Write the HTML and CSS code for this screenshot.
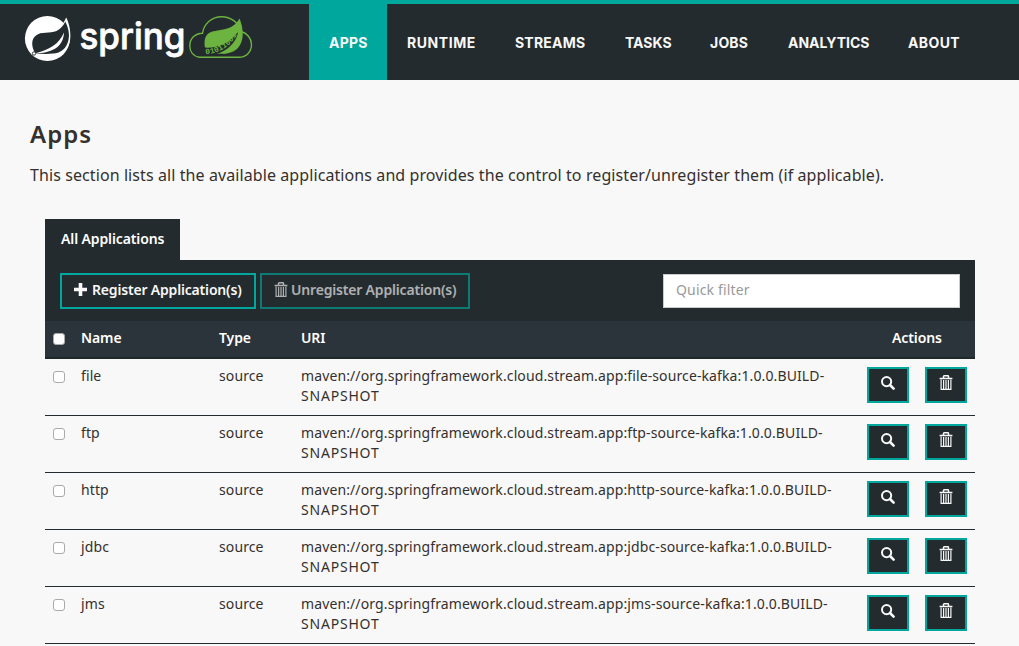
FILE: index.html
```html
<!DOCTYPE html>
<html lang="en">
<head>
<meta charset="utf-8">
<title>Apps</title>
<link rel="stylesheet" href="styles.css">
</head>
<body>
<svg class="sprite" aria-hidden="true">
  <symbol id="trash" viewBox="0 0 14 16">
    <path d="M4.500 2.800V1.500Q4.500.8 5.200.8h3.600q.7 0 .7.7V2.800M.6 3.500h12.800" fill="none" stroke="currentColor" stroke-width="1.500"/>
    <path d="M2.100 4.400v9.900h9.800V4.400M4.600 5v9M7 5v9M9.400 5v9" fill="none" stroke="currentColor" stroke-width="1.200"/>
  </symbol>
  <symbol id="search" viewBox="0 0 14 14">
    <circle cx="5.600" cy="5.600" r="4.600" fill="none" stroke="currentColor" stroke-width="2"/>
    <path d="M9 9l3.600 3.600" fill="none" stroke="currentColor" stroke-width="2.600" stroke-linecap="round"/>
  </symbol>
</svg>
<header class="navbar">
  <svg class="logo" width="240" height="60" viewBox="20 4 240 60">
    <circle cx="47.400" cy="38.500" r="22.500" fill="#fff"/>
    <path d="M66.200 17.500C68.500 22 70.500 29 70.400 36C70.300 45 66 53 58 57L60 30Z" fill="#fff"/>
    <path d="M65.300 21.500C68.500 28 69.800 34 68.500 40C66.500 48.500 61 53 53 53.600C47 54.300 41 54 36.300 53.500L34.500 52C31.500 46.500 31 39 36 35.500C41 31 50 34 56.500 31C60.500 29 63.500 25.500 65.300 21.500Z" fill="#242b2e"/>
    <path d="M64 32.500C59 44 50 49.500 35.500 53.300C50 53.300 63.500 48 64 32.500Z" fill="#fff"/>
    <circle cx="34" cy="53.500" r="1.700" fill="#fff" stroke="#242b2e" stroke-width=".9"/>
    <text class="wordmark" x="79.500" y="49" textLength="106" lengthAdjust="spacingAndGlyphs">spring</text>
    <path d="M200 57.300C193 56.500 189.800 51.500 189.800 46C189.800 38.500 195 33.400 202.500 33.200C204 23.500 212 16.700 221.500 16.700C231 16.700 239 23 241 31.500C247 33 251.500 38.500 251.500 44.500C251.500 52 246 57.300 239 57.300Z" fill="none" stroke="#6db33f" stroke-width="1.400"/>
    <path d="M239.500 18.500C243 27 244 36 241 43C237 53 227 54.500 216 53.500L205.500 50C204 44 203.500 35.500 210 32.500C219 28.500 232 32 239.500 18.500Z" fill="#6db33f"/>
    <path d="M204 47.500C217 48.500 229 44 238 32C237 44 229 53 214 56L204 56Z" fill="#242b2e"/>
    <path d="M217 53.700C227 51 235 43 238 34L241 40C238 50 230 54.500 217 53.700Z" fill="#6db33f"/>
    <path id="code-line" d="M205.500 54.200C220 53.500 231 46 238.500 32" fill="none"/>
    <text class="bits"><textPath href="#code-line">01011001</textPath></text>
  </svg>
  <nav class="nav">
    <a class="nav-item active">APPS</a>
    <a class="nav-item runtime">RUNTIME</a>
    <a class="nav-item streams">STREAMS</a>
    <a class="nav-item tasks">TASKS</a>
    <a class="nav-item jobs">JOBS</a>
    <a class="nav-item analytics">ANALYTICS</a>
    <a class="nav-item about">ABOUT</a>
  </nav>
</header>
<main class="content">
  <h1 class="title">Apps</h1>
  <p class="intro">This section lists all the available applications and provides the control to register/unregister them (if applicable).</p>
  <section class="panel">
    <div class="tab">All Applications</div>
    <div class="toolbar">
      <button class="btn register"><svg width="13" height="13" viewBox="0 0 13 13"><path d="M6.500 0v13M0 6.500h13" stroke="currentColor" stroke-width="3.600"/></svg><span>Register Application(s)</span></button>
      <button class="btn unregister"><svg width="14" height="16"><use href="#trash"/></svg><span>Unregister Application(s)</span></button>
      <input class="filter" placeholder="Quick filter">
    </div>
    <div class="row head">
      <span><i class="check"></i></span><span>Name</span><span>Type</span><span>URI</span><span class="actions-title">Actions</span>
    </div>
    <div class="row">
      <span><i class="check"></i></span><span>file</span><span>source</span><span class="uri">maven://org.springframework.cloud.stream.app:file-source-kafka:1.0.0.BUILD-<br>SNAPSHOT</span>
      <span class="actions"><button class="icon-btn"><svg width="14" height="14"><use href="#search"/></svg></button><button class="icon-btn"><svg width="14" height="16"><use href="#trash"/></svg></button></span>
    </div>
    <div class="row">
      <span><i class="check"></i></span><span>ftp</span><span>source</span><span class="uri">maven://org.springframework.cloud.stream.app:ftp-source-kafka:1.0.0.BUILD-<br>SNAPSHOT</span>
      <span class="actions"><button class="icon-btn"><svg width="14" height="14"><use href="#search"/></svg></button><button class="icon-btn"><svg width="14" height="16"><use href="#trash"/></svg></button></span>
    </div>
    <div class="row">
      <span><i class="check"></i></span><span>http</span><span>source</span><span class="uri">maven://org.springframework.cloud.stream.app:http-source-kafka:1.0.0.BUILD-<br>SNAPSHOT</span>
      <span class="actions"><button class="icon-btn"><svg width="14" height="14"><use href="#search"/></svg></button><button class="icon-btn"><svg width="14" height="16"><use href="#trash"/></svg></button></span>
    </div>
    <div class="row">
      <span><i class="check"></i></span><span>jdbc</span><span>source</span><span class="uri">maven://org.springframework.cloud.stream.app:jdbc-source-kafka:1.0.0.BUILD-<br>SNAPSHOT</span>
      <span class="actions"><button class="icon-btn"><svg width="14" height="14"><use href="#search"/></svg></button><button class="icon-btn"><svg width="14" height="16"><use href="#trash"/></svg></button></span>
    </div>
    <div class="row">
      <span><i class="check"></i></span><span>jms</span><span>source</span><span class="uri">maven://org.springframework.cloud.stream.app:jms-source-kafka:1.0.0.BUILD-<br>SNAPSHOT</span>
      <span class="actions"><button class="icon-btn"><svg width="14" height="14"><use href="#search"/></svg></button><button class="icon-btn"><svg width="14" height="16"><use href="#trash"/></svg></button></span>
    </div>
  </section>
</main>
</body>
</html>
```
FILE: styles.css
```css
* { box-sizing: border-box; }
html { overflow: hidden; }
body {
  margin: 0;
  background: #f8f8f8;
  color: #34302d;
  font: 14px/20px "Noto Sans", sans-serif;
}
.sprite { display: none; }
.navbar {
  display: flex;
  height: 80px;
  border-top: 4px solid #00a79d;
  background: #242b2e;
}
.logo { flex: none; margin: 0 49px 0 20px; }
.wordmark {
  font: 500 37px Inter, sans-serif;
  fill: #fff;
  stroke: #fff;
  stroke-width: .8px;
  stroke-linejoin: round;
}
.bits {
  font: bold 8px "Liberation Mono", monospace;
  fill: #6db33f;
}
.nav { display: flex; }
.nav-item {
  width: 78px;
  height: 76px;
  padding-left: 20px;
  color: #f8f8f8;
  font: 700 14px/77px Inter, sans-serif;
  letter-spacing: .2px;
  white-space: nowrap;
}
.active { background: #00a79d; }
.runtime { width: 108px; letter-spacing: .55px; }
.streams { width: 110px; }
.tasks { width: 85px; letter-spacing: 0; }
.analytics { width: 120px; letter-spacing: 0; }
.about { width: 92px; letter-spacing: .4px; }
.content { padding: 39px 44px 0 30px; }
.title {
  margin: 0;
  font: 600 24px/30px "Noto Sans", sans-serif;
  letter-spacing: 1px;
}
.intro {
  margin: 14px 0 0;
  font-size: 16px;
  line-height: 24px;
  letter-spacing: .09px;
  white-space: nowrap;
}
.panel { margin: 32px 0 0 15px; }
.tab {
  width: 135px;
  height: 41px;
  padding-left: 16px;
  background: #242b2e;
  color: #fff;
  font-weight: 600;
  line-height: 40px;
  letter-spacing: -.12px;
  white-space: nowrap;
}
.toolbar {
  display: flex;
  align-items: center;
  gap: 4px;
  height: 61px;
  padding: 1px 15px 0;
  background: #242b2e;
}
.btn {
  display: flex;
  align-items: center;
  gap: 5px;
  height: 36px;
  padding: 0 0 3px 12px;
  border: 2px solid #00a79d;
  background: transparent;
  color: #f8f8f8;
  font: 600 14px "Noto Sans", sans-serif;
  letter-spacing: -.18px;
  white-space: nowrap;
}
.register { width: 196px; }
.unregister { width: 210px; gap: 3px; opacity: .65; }
.filter {
  width: 297px;
  height: 34px;
  margin-left: auto;
  padding: 0 12px 3px;
  border: 1px solid #ccc;
  border-radius: 0;
  background: #fff;
  font: 14px "Noto Sans", sans-serif;
  letter-spacing: .15px;
}
.filter::placeholder { color: #999; }
.row {
  display: grid;
  grid-template-columns: 36px 138px 82px 1fr 116px;
  height: 57px;
  padding-top: 7px;
  border-bottom: 1px solid #242b2e;
  letter-spacing: .11px;
  white-space: nowrap;
}
.uri::first-line { letter-spacing: .115px; }
.uri { letter-spacing: .8px; }
.head {
  height: 38px;
  background: #2b343a;
  border-bottom: 2px solid #20282b;
  color: #fff;
  font-weight: 600;
  letter-spacing: -.1px;
}
.actions-title { padding-left: 33px; }
.check {
  display: block;
  width: 12px;
  height: 12px;
  margin: 5px 0 0 8px;
  border: 1px solid #aaa;
  border-radius: 3px;
  background: #fff;
}
.actions { display: flex; gap: 16px; padding: 1px 0 0 8px; }
.icon-btn {
  display: flex;
  align-items: center;
  justify-content: center;
  width: 42px;
  height: 36px;
  padding: 0 0 5px;
  border: 2px solid #00a79d;
  background: #242b2e;
  color: #f8f8f8;
}
```
